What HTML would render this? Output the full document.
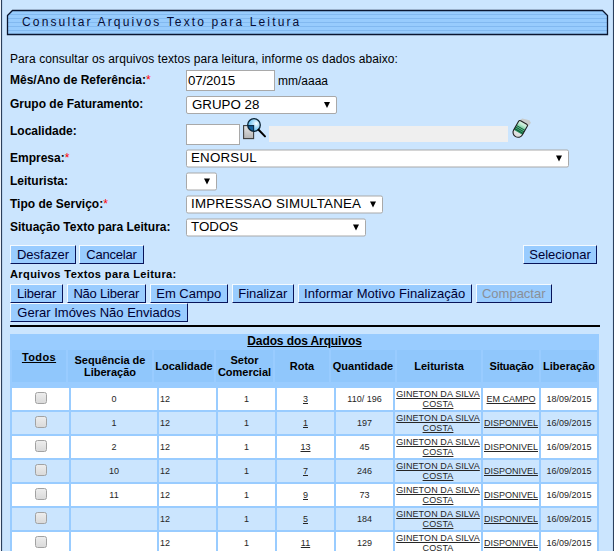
<!DOCTYPE html>
<html>
<head>
<meta charset="utf-8">
<style>
html,body{margin:0;padding:0;background:#cbe5fe;}
body{width:614px;height:551px;overflow:hidden;background:#cbe5fe;font-family:"Liberation Sans",sans-serif;font-size:12px;color:#000;position:relative;}
.abs{position:absolute;white-space:nowrap;}
.lbl{position:absolute;left:10px;font-weight:bold;font-size:12px;line-height:14px;white-space:nowrap;}
.req{color:#ff0000;font-weight:normal;}
.inp{position:absolute;box-sizing:border-box;background:#fff;border:1px solid #a9a9a9;font-size:13.33px;line-height:19px;padding-left:1px;letter-spacing:-0.15px;white-space:nowrap;}
.sel{position:absolute;box-sizing:border-box;background:#fff;border:1px solid #a9a9a9;border-radius:2px;font-size:13.33px;line-height:16px;padding-left:5px;white-space:nowrap;height:18px;}
.hp{transform:translateY(0.5px);line-height:14px !important;padding-left:4px !important;}
.sel i{position:absolute;right:6px;top:5px;width:0;height:0;border-left:3.5px solid transparent;border-right:3.5px solid transparent;border-top:6px solid #000;}
.btn{position:absolute;box-sizing:border-box;height:19px;background:#99ccff;border:1px solid;border-color:#f4faff #08145a #08145a #f4faff;font-size:13px;line-height:17px;text-align:center;color:#000033;white-space:nowrap;}
.btn.dis{color:#8a8f98;}
.hc{position:absolute;top:350px;height:32px;background:#90c7fc;font-weight:bold;font-size:11px;line-height:12px;text-align:center;display:flex;align-items:center;justify-content:center;white-space:nowrap;}
.dc{position:absolute;height:22px;font-size:9px;line-height:10px;color:#262626;text-align:center;display:flex;align-items:center;justify-content:center;}
.cb{display:block;box-sizing:border-box;width:12px;height:12px;margin-top:-2px;border:1px solid #a2a2a2;border-radius:2.5px;background:linear-gradient(#ededed,#dadada);}
u{text-decoration:underline;}
</style>
</head>
<body>
<div class="abs" style="left:0;top:0;width:1px;height:551px;background:#eef3fa;"></div>
<div class="abs" style="left:1px;top:0;width:1px;height:551px;background:#2c405c;"></div>
<div class="abs" style="left:2px;top:0;width:1px;height:551px;background:#b9d3ee;"></div>
<div class="abs" style="left:612px;top:0;width:1px;height:551px;background:#c3dcf5;"></div>
<div class="abs" style="left:613px;top:0;width:1px;height:551px;background:#2c405c;"></div>
<svg class="abs" style="left:6px;top:9px;" width="604" height="28" viewBox="0 0 604 28">
<defs><pattern id="st" x="0" y="1" width="4" height="4" patternUnits="userSpaceOnUse"><rect width="4" height="4" fill="#98ccfd"/><rect y="0" width="4" height="1" fill="#82b9f0"/></pattern></defs>
<polygon points="1.5,6.5 6.5,1.5 596.5,1.5 601.5,6.5 601.5,25.5 1.5,25.5" fill="url(#st)" stroke="#0a1630" stroke-width="1.3"/>
</svg>
<div class="abs" style="left:22px;top:14px;font-size:12px;line-height:16px;letter-spacing:2.15px;color:#060c36;">Consultar Arquivos Texto para Leitura</div>
<div class="abs" style="left:10px;top:52px;font-size:12px;line-height:14px;letter-spacing:0.09px;">Para consultar os arquivos textos para leitura, informe os dados abaixo:</div>
<div class="lbl" style="top:73px;">Mês/Ano de Referência:<span class="req">*</span></div>
<div class="inp" style="left:186px;top:70px;width:89px;height:21px;">07/2015</div>
<div class="abs" style="left:278px;top:74px;font-size:12px;line-height:14px;">mm/aaaa</div>
<div class="lbl" style="top:97px;">Grupo de Faturamento:</div>
<div class="sel" style="left:186px;top:96px;width:151px;">GRUPO 28<i></i></div>
<div class="lbl" style="top:124px;">Localidade:</div>
<div class="inp" style="left:186px;top:124px;width:54px;height:21px;"></div>
<div class="abs" style="left:269px;top:126px;width:239px;height:16px;background:#efefef;"></div>
<svg class="abs" style="left:240px;top:114px;" width="30" height="30" viewBox="0 0 30 30">
<defs><linearGradient id="pg" x1="0" y1="0" x2="0" y2="1"><stop offset="0" stop-color="#e6e6e6"/><stop offset="1" stop-color="#b4b4b4"/></linearGradient>
<radialGradient id="lg" cx="0.68" cy="0.38" r="0.6"><stop offset="0" stop-color="#ffffff"/><stop offset="0.35" stop-color="#bfe6fb"/><stop offset="1" stop-color="#6cc0f0"/></radialGradient>
<clipPath id="cc"><circle cx="14" cy="11" r="6.3"/></clipPath><clipPath id="cp"><rect x="3.5" y="11.5" width="10" height="13"/></clipPath></defs>
<rect x="3.6" y="11.6" width="10" height="13" fill="url(#pg)" stroke="#3c3c3c" stroke-width="1.1"/>
<circle cx="14" cy="11" r="6.3" fill="url(#lg)"/>
<circle cx="14" cy="11" r="6.3" fill="#13609c" clip-path="url(#cp)"/>
<g clip-path="url(#cc)"><path d="M3.6,11.6 h10 v13" fill="none" stroke="#0b2c48" stroke-width="1.1"/></g>
<circle cx="14" cy="11" r="6.3" fill="none" stroke="#0b2436" stroke-width="1.3"/>
<line x1="18.6" y1="15.8" x2="25" y2="22.4" stroke="#000" stroke-width="2" stroke-linecap="round"/>
</svg>
<svg class="abs" style="left:506px;top:112px;" width="30" height="30" viewBox="0 0 30 30">
<defs><linearGradient id="eg" x1="0" y1="0" x2="0" y2="1"><stop offset="0" stop-color="#dcf3e6"/><stop offset="0.25" stop-color="#c2ebd4"/><stop offset="0.5" stop-color="#7fd0a6"/><stop offset="1" stop-color="#1f8d5a"/></linearGradient>
<linearGradient id="ew" x1="0" y1="0" x2="0" y2="1"><stop offset="0" stop-color="#ffffff"/><stop offset="1" stop-color="#d9d9d9"/></linearGradient></defs>
<polygon points="14.2,7.8 16.4,6.4 23.4,8.2 24.9,10.8 22.4,14.2" fill="#c8cbcb"/>
<g transform="translate(17.7,10.5) rotate(30)">
<path d="M-5,1.5 a1.5,1.5 0 0 1 1.5,-1.5 h7 a1.5,1.5 0 0 1 1.5,1.5 v10 a5,4.8 0 0 1 -10,0z" fill="url(#ew)"/>
<path d="M-5,1.5 a1.5,1.5 0 0 1 1.5,-1.5 h7 a1.5,1.5 0 0 1 1.5,1.5 v9.8 h-10z" fill="url(#eg)"/>
<path d="M-5,6.2 h10 M-5,8 h10 M-5,9.8 h10" stroke="#0f5c36" stroke-width="0.9" fill="none"/>
<path d="M-5,1.5 a1.5,1.5 0 0 1 1.5,-1.5 h7 a1.5,1.5 0 0 1 1.5,1.5 v10 a5,4.8 0 0 1 -10,0z" fill="none" stroke="#202020" stroke-width="1.1"/>
</g></svg>
<div class="lbl" style="top:151px;">Empresa:<span class="req">*</span></div>
<div class="sel hp" style="left:186px;top:149px;width:383px;letter-spacing:0.2px;">ENORSUL<i></i></div>
<div class="lbl" style="top:174px;">Leiturista:</div>
<div class="sel hp" style="left:186px;top:172px;width:31px;"><i></i></div>
<div class="lbl" style="top:197px;">Tipo de Serviço:<span class="req">*</span></div>
<div class="sel hp" style="left:186px;top:195px;width:197px;letter-spacing:0.2px;">IMPRESSAO SIMULTANEA<i></i></div>
<div class="lbl" style="top:220px;">Situação Texto para Leitura:</div>
<div class="sel hp" style="left:186px;top:218px;width:180px;">TODOS<i></i></div>
<div class="btn" style="left:10px;top:245px;width:66px;letter-spacing:0px;">Desfazer</div>
<div class="btn" style="left:79px;top:245px;width:65px;letter-spacing:-0.2px;">Cancelar</div>
<div class="btn" style="left:523px;top:245px;width:74px;letter-spacing:0px;">Selecionar</div>
<div class="abs" style="left:10px;top:269px;font-size:10px;line-height:12px;font-weight:bold;letter-spacing:0.34px;transform:scaleX(1.105);transform-origin:0 0;">Arquivos Textos para Leitura:</div>
<div class="btn" style="left:10px;top:284px;width:53px;letter-spacing:-0.2px;">Liberar</div>
<div class="btn" style="left:66.5px;top:284px;width:79.5px;letter-spacing:-0.2px;">Não Liberar</div>
<div class="btn" style="left:149.5px;top:284px;width:78.5px;letter-spacing:0px;">Em Campo</div>
<div class="btn" style="left:231.5px;top:284px;width:62.5px;letter-spacing:0px;">Finalizar</div>
<div class="btn" style="left:297.5px;top:284px;width:174.5px;letter-spacing:0.06px;">Informar Motivo Finalização</div>
<div class="btn dis" style="left:475.5px;top:284px;width:76.5px;letter-spacing:0px;">Compactar</div>
<div class="btn" style="left:10px;top:303px;width:178px;letter-spacing:0px;">Gerar Imóves Não Enviados</div>
<div class="abs" style="left:10px;top:325px;width:590px;height:2px;background:#000;"></div>
<div class="abs" style="left:10px;top:334px;width:589px;height:217px;background:#99ccff;"></div>
<div class="abs" style="left:10px;top:334px;width:589px;height:14px;line-height:14px;font-size:12px;font-weight:bold;text-align:center;letter-spacing:-0.1px;"><u>Dados dos Arquivos</u></div>
<div class="hc" style="left:12px;width:54px;align-items:flex-start;padding-top:1px;height:31px;letter-spacing:0.4px;"><div><u>Todos</u></div></div>
<div class="hc" style="left:68px;width:84px;"><div>Sequência de<br>Liberação</div></div>
<div class="hc" style="left:154px;width:60px;"><div>Localidade</div></div>
<div class="hc" style="left:216px;width:57px;"><div>Setor<br>Comercial</div></div>
<div class="hc" style="left:275px;width:54px;"><div>Rota</div></div>
<div class="hc" style="left:331px;width:64px;"><div>Quantidade</div></div>
<div class="hc" style="left:397px;width:84px;"><div>Leiturista</div></div>
<div class="hc" style="left:483px;width:56px;letter-spacing:-0.25px;padding-left:1px;width:55px;"><div>Situação</div></div>
<div class="hc" style="left:541px;width:56px;"><div>Liberação</div></div>
<div class="dc" style="left:12px;top:388px;background:#ffffff;width:57px;"><div><span class="cb"></span></div></div>
<div class="dc" style="left:71px;top:388px;background:#ffffff;width:86px;"><div>0</div></div>
<div class="dc" style="left:159px;top:388px;background:#ffffff;justify-content:flex-start;padding-left:1px;width:56px;"><div>12</div></div>
<div class="dc" style="left:218px;top:388px;background:#ffffff;width:57px;"><div>1</div></div>
<div class="dc" style="left:277px;top:388px;background:#ffffff;width:57px;"><div><u>3</u></div></div>
<div class="dc" style="left:336px;top:388px;background:#ffffff;width:57px;"><div>110/ 196</div></div>
<div class="dc" style="left:395px;top:388px;background:#ffffff;width:86px;"><div><u style="letter-spacing:0.1px">GINETON DA SILVA<br>COSTA</u></div></div>
<div class="dc" style="left:483px;top:388px;background:#ffffff;width:56px;"><div><u>EM CAMPO</u></div></div>
<div class="dc" style="left:541px;top:388px;background:#ffffff;width:56px;"><div>18/09/2015</div></div>
<div class="dc" style="left:12px;top:412px;background:#cbe5fe;width:57px;"><div><span class="cb"></span></div></div>
<div class="dc" style="left:71px;top:412px;background:#cbe5fe;width:86px;"><div>1</div></div>
<div class="dc" style="left:159px;top:412px;background:#cbe5fe;justify-content:flex-start;padding-left:1px;width:56px;"><div>12</div></div>
<div class="dc" style="left:218px;top:412px;background:#cbe5fe;width:57px;"><div>1</div></div>
<div class="dc" style="left:277px;top:412px;background:#cbe5fe;width:57px;"><div><u>1</u></div></div>
<div class="dc" style="left:336px;top:412px;background:#cbe5fe;width:57px;"><div>197</div></div>
<div class="dc" style="left:395px;top:412px;background:#cbe5fe;width:86px;"><div><u style="letter-spacing:0.1px">GINETON DA SILVA<br>COSTA</u></div></div>
<div class="dc" style="left:483px;top:412px;background:#cbe5fe;width:56px;"><div><u>DISPONIVEL</u></div></div>
<div class="dc" style="left:541px;top:412px;background:#cbe5fe;width:56px;"><div>16/09/2015</div></div>
<div class="dc" style="left:12px;top:436px;background:#ffffff;width:57px;"><div><span class="cb"></span></div></div>
<div class="dc" style="left:71px;top:436px;background:#ffffff;width:86px;"><div>2</div></div>
<div class="dc" style="left:159px;top:436px;background:#ffffff;justify-content:flex-start;padding-left:1px;width:56px;"><div>12</div></div>
<div class="dc" style="left:218px;top:436px;background:#ffffff;width:57px;"><div>1</div></div>
<div class="dc" style="left:277px;top:436px;background:#ffffff;width:57px;"><div><u>13</u></div></div>
<div class="dc" style="left:336px;top:436px;background:#ffffff;width:57px;"><div>45</div></div>
<div class="dc" style="left:395px;top:436px;background:#ffffff;width:86px;"><div><u style="letter-spacing:0.1px">GINETON DA SILVA<br>COSTA</u></div></div>
<div class="dc" style="left:483px;top:436px;background:#ffffff;width:56px;"><div><u>DISPONIVEL</u></div></div>
<div class="dc" style="left:541px;top:436px;background:#ffffff;width:56px;"><div>16/09/2015</div></div>
<div class="dc" style="left:12px;top:460px;background:#cbe5fe;width:57px;"><div><span class="cb"></span></div></div>
<div class="dc" style="left:71px;top:460px;background:#cbe5fe;width:86px;"><div>10</div></div>
<div class="dc" style="left:159px;top:460px;background:#cbe5fe;justify-content:flex-start;padding-left:1px;width:56px;"><div>12</div></div>
<div class="dc" style="left:218px;top:460px;background:#cbe5fe;width:57px;"><div>1</div></div>
<div class="dc" style="left:277px;top:460px;background:#cbe5fe;width:57px;"><div><u>7</u></div></div>
<div class="dc" style="left:336px;top:460px;background:#cbe5fe;width:57px;"><div>246</div></div>
<div class="dc" style="left:395px;top:460px;background:#cbe5fe;width:86px;"><div><u style="letter-spacing:0.1px">GINETON DA SILVA<br>COSTA</u></div></div>
<div class="dc" style="left:483px;top:460px;background:#cbe5fe;width:56px;"><div><u>DISPONIVEL</u></div></div>
<div class="dc" style="left:541px;top:460px;background:#cbe5fe;width:56px;"><div>16/09/2015</div></div>
<div class="dc" style="left:12px;top:484px;background:#ffffff;width:57px;"><div><span class="cb"></span></div></div>
<div class="dc" style="left:71px;top:484px;background:#ffffff;width:86px;"><div>11</div></div>
<div class="dc" style="left:159px;top:484px;background:#ffffff;justify-content:flex-start;padding-left:1px;width:56px;"><div>12</div></div>
<div class="dc" style="left:218px;top:484px;background:#ffffff;width:57px;"><div>1</div></div>
<div class="dc" style="left:277px;top:484px;background:#ffffff;width:57px;"><div><u>9</u></div></div>
<div class="dc" style="left:336px;top:484px;background:#ffffff;width:57px;"><div>73</div></div>
<div class="dc" style="left:395px;top:484px;background:#ffffff;width:86px;"><div><u style="letter-spacing:0.1px">GINETON DA SILVA<br>COSTA</u></div></div>
<div class="dc" style="left:483px;top:484px;background:#ffffff;width:56px;"><div><u>DISPONIVEL</u></div></div>
<div class="dc" style="left:541px;top:484px;background:#ffffff;width:56px;"><div>16/09/2015</div></div>
<div class="dc" style="left:12px;top:508px;background:#cbe5fe;width:57px;"><div><span class="cb"></span></div></div>
<div class="dc" style="left:71px;top:508px;background:#cbe5fe;width:86px;"><div></div></div>
<div class="dc" style="left:159px;top:508px;background:#cbe5fe;justify-content:flex-start;padding-left:1px;width:56px;"><div>12</div></div>
<div class="dc" style="left:218px;top:508px;background:#cbe5fe;width:57px;"><div>1</div></div>
<div class="dc" style="left:277px;top:508px;background:#cbe5fe;width:57px;"><div><u>5</u></div></div>
<div class="dc" style="left:336px;top:508px;background:#cbe5fe;width:57px;"><div>184</div></div>
<div class="dc" style="left:395px;top:508px;background:#cbe5fe;width:86px;"><div><u style="letter-spacing:0.1px">GINETON DA SILVA<br>COSTA</u></div></div>
<div class="dc" style="left:483px;top:508px;background:#cbe5fe;width:56px;"><div><u>DISPONIVEL</u></div></div>
<div class="dc" style="left:541px;top:508px;background:#cbe5fe;width:56px;"><div>16/09/2015</div></div>
<div class="dc" style="left:12px;top:532px;background:#ffffff;width:57px;"><div><span class="cb"></span></div></div>
<div class="dc" style="left:71px;top:532px;background:#ffffff;width:86px;"><div></div></div>
<div class="dc" style="left:159px;top:532px;background:#ffffff;justify-content:flex-start;padding-left:1px;width:56px;"><div>12</div></div>
<div class="dc" style="left:218px;top:532px;background:#ffffff;width:57px;"><div>1</div></div>
<div class="dc" style="left:277px;top:532px;background:#ffffff;width:57px;"><div><u>11</u></div></div>
<div class="dc" style="left:336px;top:532px;background:#ffffff;width:57px;"><div>129</div></div>
<div class="dc" style="left:395px;top:532px;background:#ffffff;width:86px;"><div><u style="letter-spacing:0.1px">GINETON DA SILVA<br>COSTA</u></div></div>
<div class="dc" style="left:483px;top:532px;background:#ffffff;width:56px;"><div><u>DISPONIVEL</u></div></div>
<div class="dc" style="left:541px;top:532px;background:#ffffff;width:56px;"><div>16/09/2015</div></div>
</body>
</html>
